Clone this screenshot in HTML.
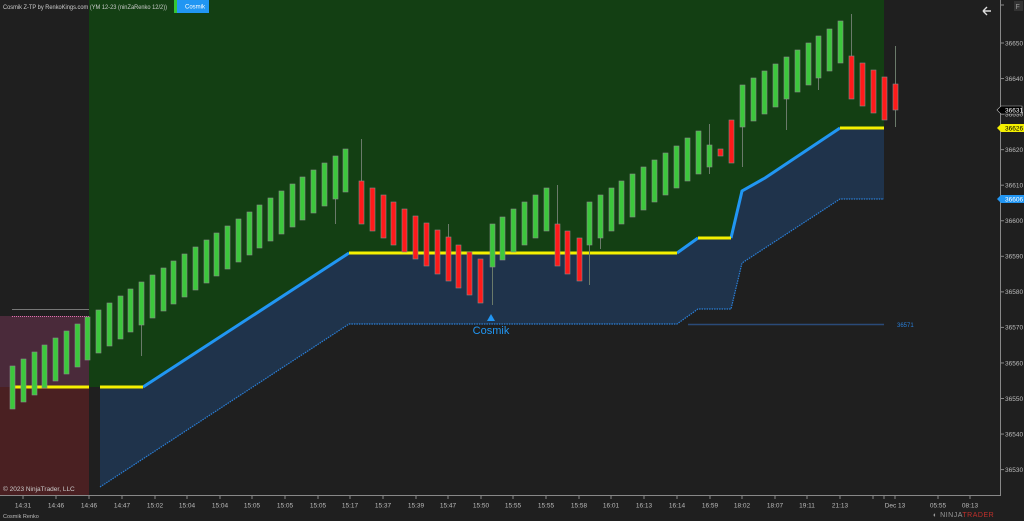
<!DOCTYPE html>
<html><head><meta charset="utf-8"><style>
html,body{margin:0;padding:0;background:#1f1f1f;width:1024px;height:521px;overflow:hidden;font-family:"Liberation Sans",sans-serif}
svg{display:block}
</style></head><body>
<svg id="c" width="1024" height="521" xmlns="http://www.w3.org/2000/svg" font-family="Liberation Sans, sans-serif">
<rect width="1024" height="521" fill="#1f1f1f"/>
<rect x="0" y="316" width="89" height="71" fill="#4a2a3a"/>
<rect x="0" y="387" width="89" height="109" fill="#4a2022"/>
<line x1="12" y1="309.5" x2="89" y2="309.5" stroke="#777" stroke-width="1"/>
<line x1="12" y1="316.5" x2="89" y2="316.5" stroke="#e070b0" stroke-width="1" stroke-dasharray="1,1"/>
<polygon fill="#133f13" points="89,0 884,0 884,128 840,128 742,191 731,238 698,238 677,253 349,253 143,387 89,387"/>
<polygon fill="#1f334b" points="100,387 143,387 349,253 677,253 698,238 731,238 742,191 840,128 884,128 884,199 840,199 742,263 731,309 698,309 677,324 349,324 100,487"/>
<polyline fill="none" stroke="#2a7fd8" stroke-width="1.2" stroke-dasharray="1.5,1" points="100,487 349,324 677,324 698,309 731,309 742,263 840,199 884,199"/>
<polyline fill="none" stroke="#2196f3" stroke-width="3" points="143,387 349,253"/>
<polyline fill="none" stroke="#2196f3" stroke-width="3" points="677,253 698,238"/>
<polyline fill="none" stroke="#2196f3" stroke-width="3" points="731,238 742,191 765,178 840,128"/>
<g stroke="#f5f000" stroke-width="3">
<line x1="12" y1="387" x2="89" y2="387"/><line x1="100" y1="387" x2="143" y2="387"/>
<line x1="349" y1="253" x2="677" y2="253"/><line x1="698" y1="238" x2="731" y2="238"/>
<line x1="840" y1="128" x2="884" y2="128"/>
</g>
<line x1="688" y1="324.5" x2="884" y2="324.5" stroke="#2a4a78" stroke-width="1.5"/>
<text x="897" y="327" font-size="6" fill="#2a7fd8">36571</text>
<g id="candles"></g>
<polygon points="491,314 487,321 495,321" fill="#2196f3"/>
<text x="491" y="334" font-size="11" fill="#2196f3" text-anchor="middle">Cosmik</text>
<text x="3" y="9" font-size="6.5" fill="#ccc" textLength="164" lengthAdjust="spacingAndGlyphs">Cosmik Z-TP by RenkoKings.com (YM 12-23 (ninZaRenko 12/2))</text>
<rect x="174" y="0" width="3" height="13" fill="#35c435"/>
<rect x="177" y="0" width="32" height="13" fill="#2196f3"/>
<text x="185" y="8.5" font-size="6" fill="#fff">Cosmik</text>
<path d="M983 11 L991 11 M983 11 L987 7 M983 11 L987 15" stroke="#ddd" stroke-width="1.4" fill="none"/>
<rect x="1014" y="1" width="9" height="10" fill="#333"/>
<text x="1015.5" y="9" font-size="7" fill="#999">F</text>
<line x1="1000.5" y1="0" x2="1000.5" y2="496" stroke="#888" stroke-width="1"/>
<line x1="0" y1="495.5" x2="1001" y2="495.5" stroke="#888" stroke-width="1"/>
<g id="yaxis" font-size="6.5" fill="#bbb"></g>
<g id="xaxis" font-size="6.5" fill="#bbb" text-anchor="middle"></g>
<polygon points="997,110 1001,106 1022,106 1022,114 1001,114" fill="#000" stroke="#bbb" stroke-width="0.6"/>
<text x="1005" y="112.5" font-size="6.5" fill="#fff">36631</text>
<polygon points="997,128 1001,124 1024,124 1024,132 1001,132" fill="#f5f000"/>
<text x="1005" y="130.5" font-size="6.5" fill="#000">36626</text>
<polygon points="997,199 1001,195 1024,195 1024,203 1001,203" fill="#2196f3"/>
<text x="1005" y="201.5" font-size="6.5" fill="#fff">36606</text>
<text x="3" y="491" font-size="6.5" fill="#ccc">© 2023 NinjaTrader, LLC</text>
<text x="3" y="518" font-size="5.5" fill="#bbb">Cosmik Renko</text>
<text x="933" y="517" font-size="7" fill="#999" letter-spacing="0.5">◐ NINJA<tspan fill="#c0302b">TRADER</tspan></text>
</svg>
<script>
var NS="http://www.w3.org/2000/svg",g=document.getElementById('candles');
function el(t,a,p){var e=document.createElementNS(NS,t);for(var k in a)e.setAttribute(k,a[k]);(p||g).appendChild(e);return e;}
var C=[];
for(var i=0;i<32;i++){C.push([12+i*10.75,366-7*i,409-7*i,'g']);}
var wk={12:[0,356],30:[0,224]};
var extra=[
[361,181,224,'r',139,0],[372,188,231,'r'],[383,195,238,'r'],[393,202,245,'r'],[404,209,252,'r'],[415,216,259,'r'],[426,223,266,'r'],[437,230,274,'r'],[448,237,281,'r',224,0],[458,245,288,'r'],[469,252,295,'r'],[480,259,303,'r'],
[492,224,267,'g',0,305],[502,217,260,'g'],[513,209,252,'g'],[524,202,245,'g'],[535,195,238,'g'],[546,188,231,'g'],[557,224,266,'r',185,0],[567,231,274,'r'],[579,238,281,'r'],
[589,202,245,'g',0,285],[600,195,238,'g',0,249],[611,188,231,'g'],[621,181,224,'g'],[632,174,217,'g'],[643,167,210,'g'],[654,160,202,'g'],[665,153,195,'g'],[676,146,188,'g'],[687,138,181,'g'],[698,131,174,'g'],[709,145,167,'g',124,174],[720,149,156,'r'],[731,120,163,'r'],
[742,85,127,'g',0,167],[753,78,121,'g'],[764,71,114,'g'],[775,64,107,'g'],[786,57,99,'g',0,130],[797,50,92,'g'],[808,43,85,'g'],[818,36,78,'g',0,90],[829,29,71,'g'],[840,21,63,'g'],
[851,56,99,'r',14,0],[862,63,106,'r'],[873,70,113,'r'],[884,77,120,'r'],[895,84,110,'r',46,127]];
C.forEach(function(c,i){var w=wk[i];if(w)c.push(w[0],w[1]);});
C=C.concat(extra);
C.forEach(function(c){var x=Math.round(c[0])+0.5,t=c[1],b=c[2];
 if(c[4])el('line',{x1:x,y1:c[4],x2:x,y2:t,stroke:'#6a7a6a','stroke-width':1});
 if(c[5])el('line',{x1:x,y1:b,x2:x,y2:c[5],stroke:'#6a7a6a','stroke-width':1});
 el('rect',{x:x-2.5,y:t,width:5,height:b-t,fill:c[3]=='g'?'#3cc83c':'#ff1a1a',stroke:'#8a8a8a','stroke-width':0.6});
});
var ya=document.getElementById('yaxis');
for(var p=36650;p>=36530;p-=10){var y=43+(36650-p)*3.555;
 el('line',{x1:1001,y1:y,x2:1004,y2:y,stroke:'#888'},ya);
 el('text',{x:1005,y:y+2.3},ya).textContent=p;}
el('line',{x1:1001,y1:5,x2:1004,y2:5,stroke:'#888'},ya);
var xa=document.getElementById('xaxis');
var T=[[23,'14:31'],[56,'14:46'],[89,'14:46'],[122,'14:47'],[155,'15:02'],[187,'15:04'],[220,'15:04'],[252,'15:05'],[285,'15:05'],[318,'15:05'],[350,'15:17'],[383,'15:37'],[416,'15:39'],[448,'15:47'],[481,'15:50'],[513,'15:55'],[546,'15:55'],[579,'15:58'],[611,'16:01'],[644,'16:13'],[677,'16:14'],[710,'16:59'],[742,'18:02'],[775,'18:07'],[807,'19:11'],[840,'21:13'],[895,'Dec 13'],[938,'05:55'],[970,'08:13']];
T.forEach(function(t){el('line',{x1:t[0],y1:496,x2:t[0],y2:499,stroke:'#888'},xa);el('text',{x:t[0],y:507.5},xa).textContent=t[1];});
[873,884].forEach(function(x){el('line',{x1:x,y1:496,x2:x,y2:499,stroke:'#888'},xa);});
</script>
</body></html>
